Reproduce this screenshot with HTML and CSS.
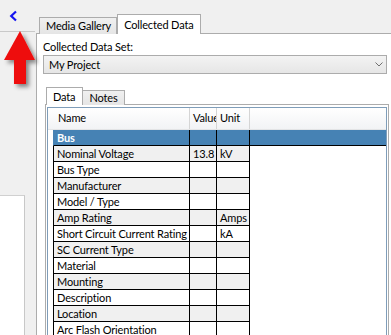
FILE: index.html
```html
<!DOCTYPE html>
<html lang="en">
<head>
  <meta charset="UTF-8" />
  <meta name="viewport" content="width=device-width, initial-scale=1.0"/>
  <title>Collected Data</title>
  <link rel="stylesheet" href="styles.css">
</head>
<body>
  <div class="app">
    <aside class="sidebar">
      <div class="back">
        <svg width="36" height="31" viewBox="0 0 36 31">
          <path d="M16 11.5 L11.2 16 L16 20.5" fill="none" stroke="#1515f0" stroke-width="2.2"/>
        </svg>
      </div>
      <div class="side-box"></div>
    </aside>

    <main class="main">
      <div class="tabs">
        <div class="tab">Media Gallery</div>
        <div class="tab active">Collected Data</div>
      </div>
      <div class="pane">
        <div class="set-label">Collected Data Set:</div>
        <div class="select">
          <span>My Project</span>
          <svg class="caret" width="8" height="5" viewBox="0 0 8 5">
            <path d="M0.5 0.5 L4 4 L7.5 0.5" fill="none" stroke="#707070" stroke-width="1"/>
          </svg>
        </div>

        <div class="tabs inner">
          <div class="tab active">Data</div>
          <div class="tab">Notes</div>
        </div>
        <div class="inner-pane">
          <div class="grid">
            <div class="grid-head">
              <div class="hcell c-name">Name</div>
              <div class="hcell c-val">Value</div>
              <div class="hcell c-unit">Unit</div>
              <div class="hcell c-rest"></div>
            </div>
            <div class="row group">
              <div class="cell c-name">Bus</div>
              <div class="cell c-val"></div>
              <div class="cell c-unit"></div>
            </div>
            <div id="rows"></div>
          </div>
        </div>
      </div>
    </main>

    <svg class="arrow" width="50" height="95" viewBox="0 0 50 95">
      <defs>
        <filter id="shadow" x="-30%" y="-30%" width="160%" height="160%">
          <feDropShadow dx="3" dy="3" stdDeviation="2" flood-color="#000" flood-opacity="0.45"/>
        </filter>
      </defs>
      <polygon points="20,31 4,60 14,60 14,84 26,84 26,60 35,60" fill="#ee1010" filter="url(#shadow)"/>
    </svg>
  </div>

  <script>
    const rows = [
      ['Nominal Voltage', '13.8', 'kV'],
      ['Bus Type', '', ''],
      ['Manufacturer', '', ''],
      ['Model / Type', '', ''],
      ['Amp Rating', '', 'Amps'],
      ['Short Circuit Current Rating', '', 'kA'],
      ['SC Current Type', '', ''],
      ['Material', '', ''],
      ['Mounting', '', ''],
      ['Description', '', ''],
      ['Location', '', ''],
      ['Arc Flash Orientation', '', '']
    ];
    const container = document.getElementById('rows');
    rows.forEach((r, i) => {
      container.innerHTML += `<div class="row ${i % 2 === 0 ? 'alt' : ''}">
        <div class="cell c-name">${r[0]}</div>
        <div class="cell c-val">${r[1]}</div>
        <div class="cell c-unit">${r[2]}</div>
      </div>`;
    });
  </script>
</body>
</html>
```

FILE: styles.css
```css
* {
  box-sizing: border-box;
}
body {
  margin: 0;
  font-family: "Segoe UI", Lato, sans-serif;
  font-size: 11px;
  letter-spacing: -0.15px;
  color: #000;
  background-color: #f0f0f0;
}
.app {
  display: flex;
  width: 391px;
  height: 335px;
  overflow: hidden;
  position: relative;
}
.sidebar {
  width: 36px;
  flex: none;
  display: flex;
  flex-direction: column;
}
.back {
  width: 35px;
  height: 32px;
  border-bottom: 1px solid #c9c9c9;
}
.back svg {
  display: block;
}
.side-box {
  margin-top: auto;
  width: 25px;
  height: 140px;
  background-color: #fff;
  border-top: 1px solid #d0d0d0;
  border-right: 1px solid #c8c8c8;
}
.main {
  flex: none;
  width: 360px;
  padding-top: 14px;
}
.tabs {
  display: flex;
  align-items: flex-end;
  height: 20px;
  padding-left: 3px;
  margin-bottom: -1px;
  position: relative;
  z-index: 1;
}
.tab {
  height: 17px;
  line-height: 15px;
  padding: 0 5px 0 6px;
  border: 1px solid #acacac;
  border-bottom: none;
  background: linear-gradient(#f0f0f0, #e5e5e5);
  white-space: nowrap;
}
.tab + .tab {
  border-left: none;
}
.tab.active {
  height: 20px;
  padding: 2px 6px 0 6px;
  background: #fff;
  border-left: 1px solid #acacac;
}
.tab.active + .tab {
  border-left: none;
}
.pane {
  border-top: 1px solid #acacac;
  border-left: 1px solid #acacac;
  background-color: #fff;
  height: 302px;
  padding: 5px 0 0 6px;
}
.set-label {
  line-height: 15px;
  height: 16px;
}
.select {
  width: 344px;
  height: 19px;
  border: 1px solid #acacac;
  background: linear-gradient(#f3f3f3, #e6e6e6);
  padding-left: 5px;
  line-height: 16px;
  display: flex;
  align-items: center;
  justify-content: space-between;
  padding-right: 3px;
}
.caret {
  display: block;
}
.tabs.inner {
  margin-top: 13px;
  margin-left: 2px;
  height: 18px;
  padding-left: 1px;
}
.tabs.inner .tab {
  height: 15px;
  line-height: 14px;
  padding: 0 6px;
}
.tabs.inner .tab.active {
  height: 18px;
  padding: 2px 7px 0 6px;
}
.inner-pane {
  margin-left: 2px;
  width: 344px;
  height: 240px;
  border: 1px solid #acacac;
  border-bottom: none;
  padding: 2px 1px 0 1px;
}
.grid {
  height: 230px;
  border: 1px solid #7f9db9;
  border-bottom: none;
  overflow: hidden;
}
.grid-head {
  display: flex;
  height: 22px;
  background: linear-gradient(#ffffff, #f2f3f5);
  border-bottom: 1px solid #e3e4e6;
}
.hcell {
  line-height: 20px;
  padding-left: 3px;
  border-right: 1px solid #d5d5d5;
  overflow: hidden;
  white-space: nowrap;
}
.grid-head .c-name {
  width: 142px;
  padding-left: 10px;
}
.grid-head .c-val {
  width: 27px;
}
.grid-head .c-unit {
  width: 33px;
}
.grid-head .c-rest {
  flex: 1;
  border-right: none;
}
.row {
  display: flex;
  width: 197px;
  height: 16px;
  margin-left: 5px;
  border-left: 1px solid #000;
  border-bottom: 1px solid #000;
}
.row.alt {
  background-color: #f0f0f0;
}
.row.group {
  width: auto;
  background-color: #4682b4;
  color: #fff;
  font-weight: bold;
  border-left-color: #4682b4;
}
.cell {
  line-height: 15px;
  padding-left: 3px;
  border-right: 1px solid #000;
  overflow: hidden;
  white-space: nowrap;
}
.cell.c-name {
  width: 136px;
}
.cell.c-val {
  width: 27px;
}
.cell.c-unit {
  width: 33px;
}
.arrow {
  position: absolute;
  left: 0;
  top: 0;
}
```
